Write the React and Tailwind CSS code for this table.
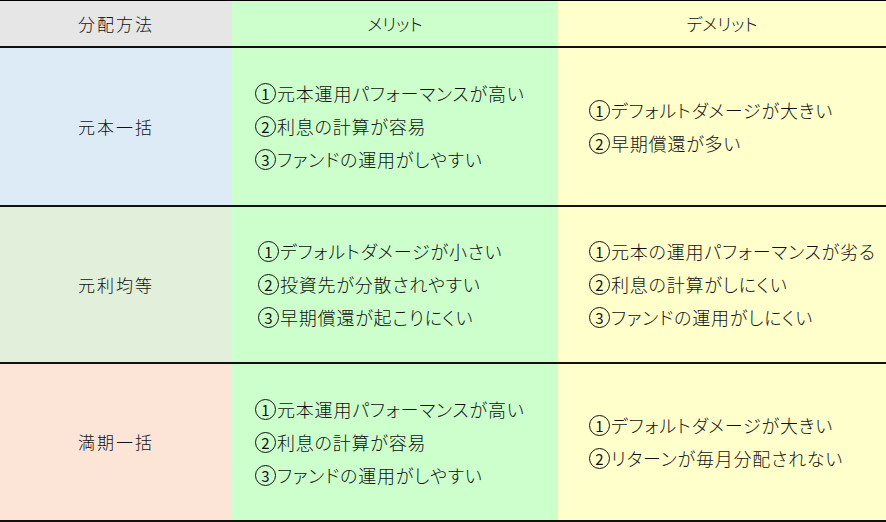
import React from "react";

const rows = [
  {
    label: "元本一括",
    bg: "bg-[#ddebf7]",
    h: "h-[159px]",
    merit: ["元本運用パフォーマンスが高い", "利息の計算が容易", "ファンドの運用がしやすい"],
    meritPl: "pl-[23px]",
    demerit: ["デフォルトダメージが大きい", "早期償還が多い"],
  },
  {
    label: "元利均等",
    bg: "bg-[#e2efda]",
    h: "h-[157px]",
    merit: ["デフォルトダメージが小さい", "投資先が分散されやすい", "早期償還が起こりにくい"],
    meritPl: "pl-[26px]",
    demerit: ["元本の運用パフォーマンスが劣る", "利息の計算がしにくい", "ファンドの運用がしにくい"],
  },
  {
    label: "満期一括",
    bg: "bg-[#fce4d6]",
    h: "h-[158px]",
    merit: ["元本運用パフォーマンスが高い", "利息の計算が容易", "ファンドの運用がしやすい"],
    meritPl: "pl-[23px]",
    demerit: ["デフォルトダメージが大きい", "リターンが毎月分配されない"],
  },
];

function Circle({ n }) {
  return (
    <span className="inline-flex items-center justify-center w-[21px] h-[21px] rounded-full border-[1.5px] border-[#111] text-[15px] font-normal leading-none tracking-normal mr-[1px] shrink-0">
      {n}
    </span>
  );
}

function Lines({ items }) {
  return (
    <div className="flex flex-col">
      {items.map((t, i) => (
        <div
          key={t}
          className="flex items-center h-[33px] text-[18px] font-light tracking-[0.8px] text-[#111] whitespace-nowrap [font-feature-settings:'palt']"
        >
          <Circle n={i + 1} />
          <span>{t}</span>
        </div>
      ))}
    </div>
  );
}

export default function App() {
  return (
    <div className="w-[886px] h-[522px] bg-white overflow-hidden font-['Noto_Sans_CJK_JP','Noto_Sans',sans-serif]">
      <div className="border-t border-black">
        <div className="grid grid-cols-[232px_326px_328px] h-[47px] border-b-2 border-[#111]">
          <div className="bg-[#e7e6e6] flex items-center justify-center text-[17px] font-light tracking-[2px] text-[#111]">
            分配方法
          </div>
          <div className="bg-[#ccffcc] flex items-center justify-center text-[17px] font-light text-[#111] [font-feature-settings:'palt']">
            メリット
          </div>
          <div className="bg-[#ffffcc] flex items-center justify-center text-[17px] font-light text-[#111] [font-feature-settings:'palt']">
            デメリット
          </div>
        </div>
        {rows.map((r) => (
          <div
            key={r.label}
            className={`grid grid-cols-[232px_326px_328px] ${r.h} border-b-2 border-[#111]`}
          >
            <div className={`${r.bg} flex items-center justify-center text-[17px] font-light tracking-[2px] text-[#111]`}>
              {r.label}
            </div>
            <div className={`bg-[#ccffcc] flex items-center ${r.meritPl}`}>
              <Lines items={r.merit} />
            </div>
            <div className="bg-[#ffffcc] flex items-center pl-[31px]">
              <Lines items={r.demerit} />
            </div>
          </div>
        ))}
      </div>
    </div>
  );
}
